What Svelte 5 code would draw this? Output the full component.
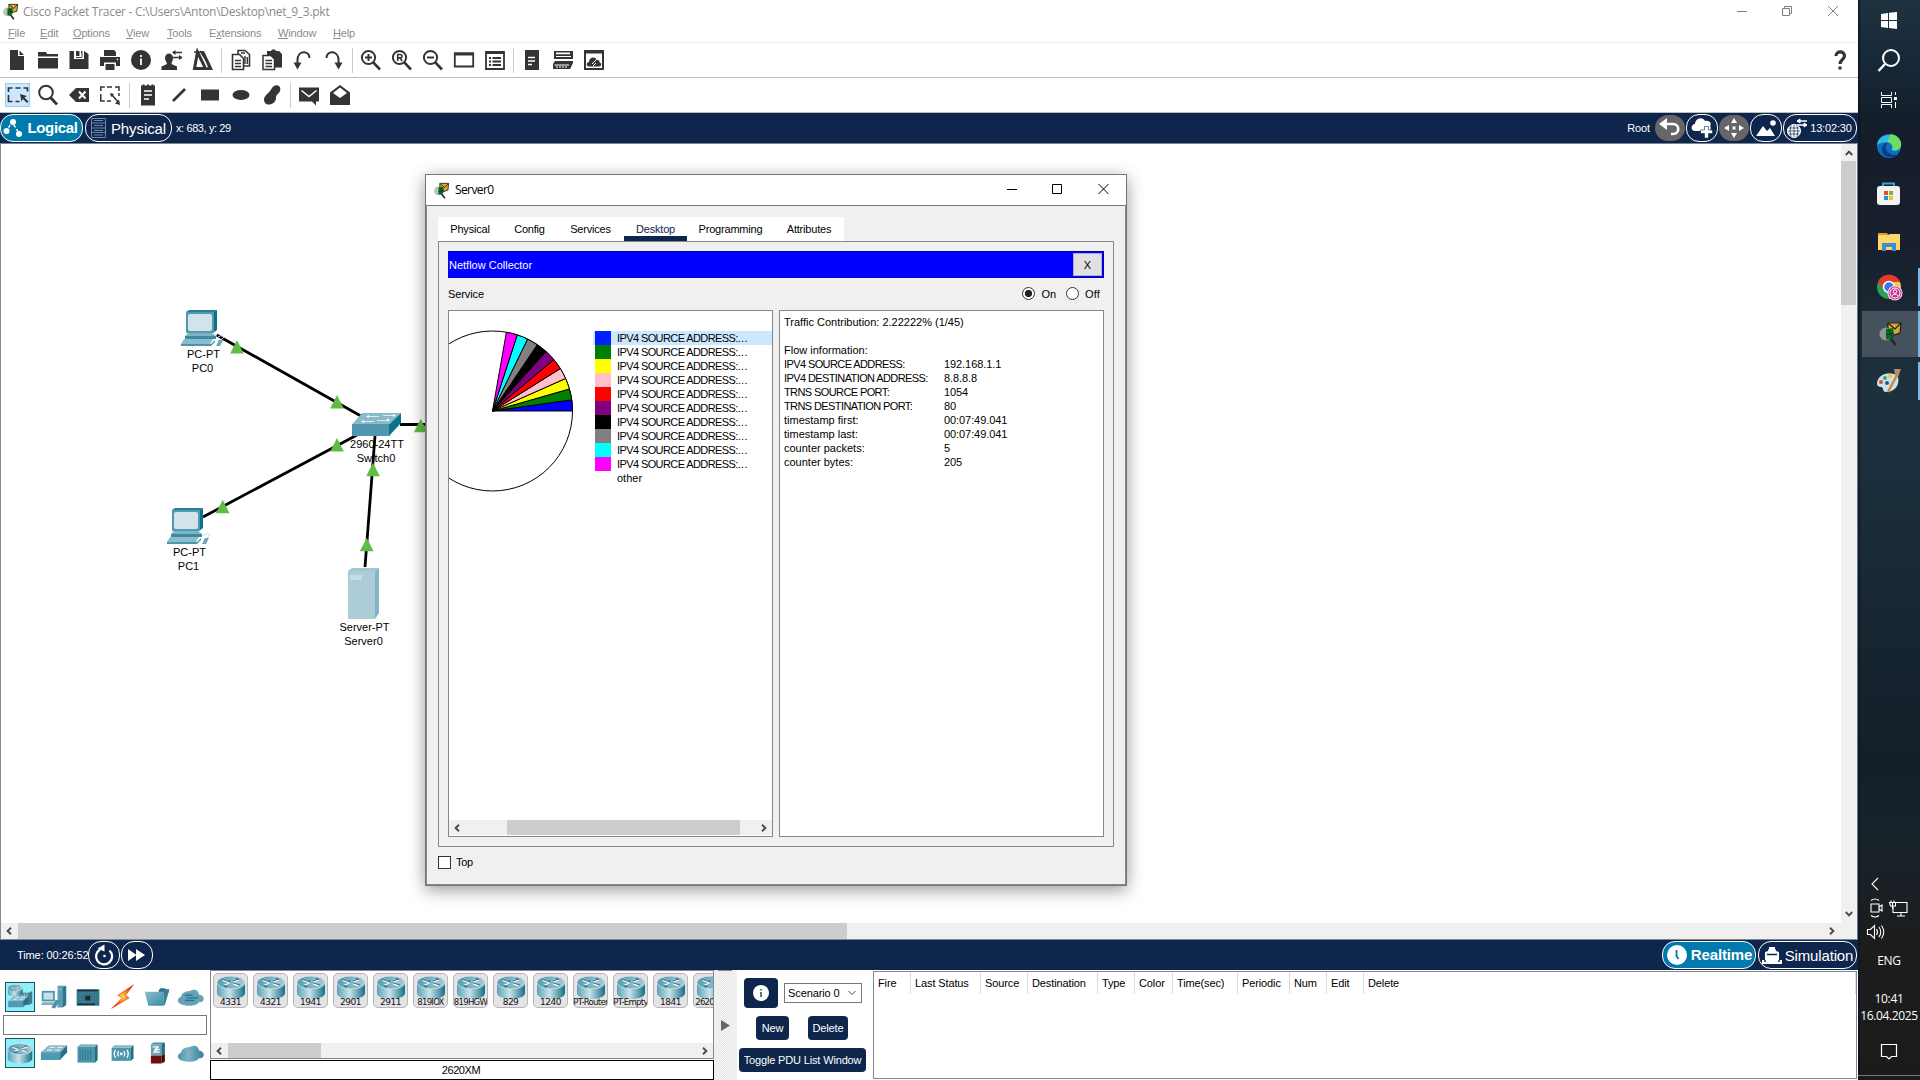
<script>
  const g = '#333436';
  const mag = (inner) =>
    `<circle cx="9.5" cy="9.5" r="6.6" fill="#fff" stroke="${g}" stroke-width="2"/><path d="M14.3 14.3 21 21.5" stroke="${g}" stroke-width="2.6"/>${inner}`;

  const icons = {
    doc: `<path fill="${g}" d="M5 2h8v6h6v14H5zM14.5 2.5 19 7h-4.500z"/>`,
    folder: `<path fill="${g}" d="M2 4h8l1 2h11v2.500H2zM2 10h20v10.500H2z"/>`,
    save: `<path fill="${g}" d="M2.500 3H7v8h10V3l4.500 3v15h-19zM9 3h3.500v5H9zM14 3h1.500v6H9v1h6z"/>`,
    print: `<path fill="${g}" d="M6 2h10l2 2v4H6zM2 9h20v9h-4v-3.500H6V18H2z"/><path fill="${g}" d="M7.500 16h9v6h-9z"/><circle cx="19.500" cy="11.500" r=".8" fill="#fff"/>`,
    info: `<circle cx="12" cy="12" r="10" fill="${g}"/><path stroke="#fff" stroke-width="1.800" d="M12 10.500V17M12 7v2"/>`,
    user: `<path fill="${g}" d="M5 10c0-6 8-6 8 0 0 3-1.500 4-1.500 6l5.500 2.500V22H1.500v-3.500L7 16c0-2-2-3-2-6z"/><path fill="none" stroke="${g}" stroke-width="1.500" d="M13 4.500h9M13 9.500h9"/><path fill="${g}" d="m12 4.500 3.500-2.500v5zM22.500 9.500 19 7v5z"/>`,
    tri: `<path fill="none" stroke="${g}" stroke-width="3" d="M6.500 4 3.500 20.500h11z"/><path fill="none" stroke="${g}" stroke-width="1.500" d="M3 4h7M9 3l10 15"/><path fill="${g}" d="M10 3h3l9 19H11l6-3z"/>`,
    copy: `<path fill="#fff" stroke="${g}" stroke-width="1.600" d="M9 2.500h7l4.500 4V18H9z"/><path stroke="${g}" fill="#fff" stroke-width="1.600" d="M3.500 6.500h7l4 4V21.500h-11z"/><path stroke="${g}" stroke-width="1.400" d="M6 12.500h6M6 15.500h6M6 18.500h6M16 8v8M18.300 9v7M12 5h4"/>`,
    paste: `<path fill="${g}" d="M7 3h4l1-1.500h3L16 3h3l3 3v13.500H7z"/><path stroke="${g}" fill="#fff" stroke-width="1.500" d="M3 7.500h8l3.500 3.500v10.500H3z"/><path stroke="${g}" stroke-width="1.400" d="M5.500 12.500H12M5.500 15.500H12M5.500 18.500H12"/>`,
    undo: `<path fill="none" stroke="${g}" stroke-width="2" d="M18.500 10c0-8-12-8-12 2v5"/><path fill="${g}" d="M2.500 14.500h8l-4 7z"/>`,
    redo: `<path fill="none" stroke="${g}" stroke-width="2" d="M5.500 10c0-8 12-8 12 2v5"/><path fill="${g}" d="M13.500 14.500h8l-4 7z"/>`,
    zin: mag(`<path stroke="${g}" stroke-width="2" d="M6 9.500h7M9.500 6v7"/>`),
    zr: mag(`<path fill="none" stroke="${g}" stroke-width="1.600" d="M7.700 13V6.500H10q2 0 2 1.700t-2 1.700H7.700M10 10l2.200 3"/>`),
    zout: mag(`<path stroke="${g}" stroke-width="2" d="M6 9.500h7"/>`),
    win: `<path fill="none" stroke="${g}" stroke-width="1.800" d="M2.800 5.500h18.400v13H2.800z"/><path stroke="${g}" stroke-width="3" d="M2 6h20"/>`,
    list: `<path fill="none" stroke="${g}" stroke-width="1.800" d="M3 4h18v17H3z"/><path stroke="${g}" stroke-width="3" d="M3 4.500h18"/><path stroke="${g}" stroke-width="1.800" d="M6 10h2M9.500 10H18M6 13.500h2M9.500 13.500H18M6 17h2M9.500 17H18"/>`,
    page: `<path fill="${g}" d="M5 2h14v20H5z"/><path stroke="#fff" stroke-width="1.500" d="M8 9.500h7M8 13h7M8 16.500h4"/>`,
    device: `<path fill="${g}" d="M3 3h19v8H3zM4 13h18v2l-3 6H2v-5z"/><path fill="#fff" d="M5 4.500h14v1.800H5zM5 8h15v1H5zM3.500 16.500H18v1H3.500z"/><path stroke="#fff" stroke-width="1" d="M6 18v2M9 18v2M12 18v2M15 18v2M4 12h17"/>`,
    cloud: `<path fill="none" stroke="${g}" stroke-width="2" d="M3 3h18v18H3z"/><path stroke="${g}" stroke-width="3" d="M3 4h18"/><path fill="${g}" d="M7 18.500c-3 0-3-4.500 0-4.500 0-5 6.500-6 7.500-2 3-.5 3.500 2 3 2.500 2.500 0 2 4 0 4z"/><path fill="none" stroke="#fff" d="M10 16l4-4m0 3-3 3"/>`,
    sel: `<path fill="none" stroke="${g}" stroke-width="1.700" d="M2.500 9V5h4M9.500 5h5M17.500 5h4v3.500M2.500 12v6.500h4M9.500 18.500h4"/><path fill="${g}" d="m14 11 7 2-2.500 1.500 4 4-1.500 1.500-4-4-1.500 2.500z"/>`,
    resize: `<path fill="none" stroke="${g}" stroke-width="1.500" d="M2.800 8V4h4M9 4h5M17 4h4v4M2.800 11v7h4M9 18h4M21 10v3M14 12l7 8"/><path fill="${g}" d="m12 10 4 1-3 3zM22 22l-5-1.500 4-4z"/>`,
    find: `<circle cx="10" cy="9.500" r="6.800" fill="none" stroke="${g}" stroke-width="2"/><path d="m14.500 14.500 6.500 7" stroke="${g}" stroke-width="2.800"/>`,
    del: `<path fill="${g}" d="M9 5h13v14H9l-7-7z"/><path stroke="#fff" stroke-width="2" d="m12 8.500 6.500 7m0-7-6.500 7"/>`,
    note: `<path fill="${g}" d="M5 2.500h1.500V1.500h2v1H11v-1h2v1h2.500v-1h2v1H19v20H5z"/><path stroke="#fff" stroke-width="1.500" d="M8 8h8M8 12h8M8 16h5"/>`,
    line: `<path stroke="${g}" stroke-width="2.600" d="M6 18 18 6"/>`,
    rect: `<path fill="${g}" d="M3 6.500h18v11H3z"/>`,
    oval: `<ellipse cx="12" cy="12" rx="8.500" ry="5" fill="${g}"/>`,
    blob: `<path fill="${g}" d="M12 5c3-5 10-3 8 3-1 3-4 3-4 7 0 6-9 9-11.500 4C2 13 9 11 12 5z"/>`,
    mail: `<path fill="${g}" d="M2 4.500h20v14h-3v4l-4-4H2z"/><path fill="none" stroke="#fff" stroke-width="1.500" d="m4.500 7.500 7.500 6 7.500-6"/>`,
    open: `<path fill="${g}" d="M2 9.500 12 2l10 7.500V22H2z"/><path fill="#fff" d="m5 10 7-5.500 7 5.500-7 5z"/>`
  };

  const bar1 = ['doc', 'folder', 'save', 'print', 'info', 'user', 'tri', '|', 'copy', 'paste', 'undo', 'redo', '|', 'zin', 'zr', 'zout', 'win', 'list', '|', 'page', 'device', 'cloud'];
  const bar2 = ['sel', 'find', 'del', 'resize', '|', 'note', 'line', 'rect', 'oval', 'blob', '|', 'mail', 'open'];
  // label, width, index of the underlined access key
  const menus = [['File', 16, 0], ['Edit', 17, 0], ['Options', 37, 0], ['View', 25, 0], ['Tools', 26, 0], ['Extensions', 53, 1], ['Window', 39, 0], ['Help', 22, 0]];
  const tabs = [['Physical', 64], ['Config', 55], ['Services', 67], ['Desktop', 63], ['Programming', 87], ['Attributes', 70]];
  const colors = ['#0000ff', '#008000', '#ffff00', '#ffc0cb', '#ff0000', '#800080', '#000000', '#808080', '#00ffff', '#ff00ff'];
  const swatches = ['#0020ff', ...colors.slice(1)];

  const R = 80, CX = 43.5, CY = 100;
  const point = (deg) => {
    const a = (deg * Math.PI) / 180;
    return `${(CX + R * Math.cos(a)).toFixed(2)} ${(CY - R * Math.sin(a)).toFixed(2)}`;
  };
  const slices = colors.map((fill, i) => ({ fill, d: `M${CX} ${CY}L${point(i * 8)}A${R} ${R} 0 0 0 ${point(i * 8 + 8)}Z` }));

  const flow = [
    ['IPV4 SOURCE ADDRESS:', '192.168.1.1', 1], ['IPV4 DESTINATION ADDRESS:', '8.8.8.8', 1], ['TRNS SOURCE PORT:', '1054', 1],
    ['TRNS DESTINATION PORT:', '80', 1], ['timestamp first:', '00:07:49.041', 0], ['timestamp last:', '00:07:49.041', 0],
    ['counter packets:', '5', 0], ['counter bytes:', '205', 0]
  ];
  const models = ['4331', '4321', '1941', '2901', '2911', '819IOX', '819HGW', '829', '1240', 'PT-Router', 'PT-Empty', '1841', '2620XM'];
  const columns = [['Fire', 37], ['Last Status', 70], ['Source', 47], ['Destination', 70], ['Type', 37], ['Color', 38], ['Time(sec)', 65], ['Periodic', 52], ['Num', 37], ['Edit', 37], ['Delete', 492]];

  const routerArt = `<path fill="url(#cyl)" d="M2 9v11c0 8 28 8 28 0V9z"/><ellipse cx="16" cy="9.500" rx="14" ry="6.500" fill="url(#top)" stroke="#d5e8ef" stroke-width=".8"/><path fill="none" stroke="#3c6f80" stroke-width="1" d="m7 6.500 7 2.500m0 0 .5-2M25 12l-7-2m-4 1.500-5 1.500m2.500-2-2.500 2 3 .5M18 8l6-2m-3-.4 3 .4-1.500 2"/><path fill="none" stroke="#fff" stroke-width="1.200" d="m7.500 7.500 6 2.200M18.500 9l5.500-1.800M18 11l5.500 1.700M9.500 12l5-1.600"/>`;
  const switchArt = `<path fill="#8ab9c9" d="m2 15 9-8h21l-8 8z"/><path fill="#4f9ab2" d="M2 15h22v9H2z"/><path fill="#28718a" d="m24 15 8-8v8l-8 9z"/><path stroke="#fff" d="M12 9.500h6M21 9.500h6M9 12.500h6M18 12.500h6"/>`;
  const palette1 = [
    `<path fill="#3d7c8f" d="M17 11h9l4-2v14l-4 2h-9z"/><path stroke="#8fc1d0" stroke-width="1.500" d="M18 12v10M21 12v10M24 12v10"/><g transform="translate(1 0) scale(.6)">${routerArt}</g><g transform="translate(1 9) scale(.78)">${switchArt}</g>`,
    `<path fill="#5c9db3" d="M20 3h9v22l-3 3h-6z"/><path fill="#2d788f" d="m26 5 4-2v22l-4 3z"/><path fill="#4f94ac" d="M2 9h15v12H2z"/><path fill="#c7dfe8" d="M4 11h11v8H4z"/><path fill="#7fb2c4" d="M3 22h14l2 3H1z"/><path fill="#4c94ab" d="m18 19 5 1-6 9-4-1z"/><path stroke="#a8ced9" d="M21 7h4"/>`,
    `<path fill="#31758b" d="M3 7h26v19H3z"/><path fill="#1c2c35" d="M13 14.500h5.500V20H13zM4 8h23v1.500H4zM4 23.500h20V25H4z"/><path stroke="#5d97a9" stroke-dasharray="1 1" d="M6 11.500h20M20 14.500h7M20 17.500h7M5 13.500h6M5 18.500h6M6 21.500h20"/>`,
    `<path fill="url(#bolt)" stroke="#e33e20" stroke-width=".6" d="M28 2 10 14l5 3L3 29l20-12-4-3z"/>`,
    `<path fill="#2a7389" d="M18 8l2-2h5l1 1h4l-1 4H18z"/><path fill="url(#fold)" d="M2 10h22l-1 16H6z"/><path fill="#347f96" d="M24 8h6l-5 17-2 1z"/>`,
    `<path fill="#64a3b8" d="M8 25c-7 0-10-7-3-10 0-5 8-6 10-6 4-3 10-1 10 4 8 1 7 10 0 9-2 4-11 5-17 3z"/><path stroke="#27768f" stroke-width="1.500" d="M9 14h9M11 17h13M9 20h11"/>`
  ];
  const palette2 = [
    `<g transform="translate(0 2)">${routerArt}</g>`,
    `<g transform="translate(-1 0)">${switchArt}</g>`,
    `<path fill="#4c95ab" d="M4 9h20v18H4z"/><path fill="#83b6c6" d="m4 9 3-3h20l-3 3z"/><path fill="#246c82" d="m24 9 3-3v18l-3 3z"/><path stroke="#2c7389" d="M7 12v12M10 12v12M13 12v12M16 12v12M19 12v12"/>`,
    `<path fill="#4c97ae" d="M3 10h22v15H3z"/><path fill="#83b6c6" d="m3 10 3-3h22l-3 3z"/><path fill="#246c82" d="m25 10 3-3v15l-3 3z"/><circle cx="14" cy="17" r="1.500" fill="#fff"/><path fill="none" stroke="#fff" stroke-width="1.400" d="M11 14q-2 3 0 6M17 14q2 3 0 6M7.500 12.500q-3 4.500 0 9M20.500 12.500q3 4.500 0 9"/>`,
    `<path fill="#4c8ea3" d="m9 6 3-2h13l-3 2z"/><path fill="#6aa5b5" d="M9 6h12v13H9z"/><path fill="#276c80" d="m21 6 4-2v15h-4z"/><path fill="#6c0d12" d="M9 19h12v9H9z"/><path fill="#4b0609" d="m21 19 4-1v8l-4 2z"/><path stroke="#fff" fill="none" stroke-width="1.600" d="M11 9h6l-3 3h5m0 3h-6l3-3"/>`,
    `<path fill="url(#fluff)" d="M8 25c-7 0-10-7-3-10 0-5 8-6 10-6 4-3 10-1 10 4 8 1 7 10 0 9-2 4-11 5-17 3z"/>`
  ];
  const tracer = `<path fill="#d9a441" stroke="#22230f" stroke-width="1.200" d="m10 2 13 0-1 10-12 4z"/><path fill="none" stroke="#22230f" stroke-width="1.200" d="m10 2 7 6 6-6"/><circle cx="8" cy="13" r="6.500" fill="#aaaea8" fill-opacity=".75"/><path fill="#0a6b20" d="M8 8l7-1 1 6-3 6-5-1z"/><path stroke="#063a12" d="M10 8l5 9M8 14l8-2"/><path stroke="#22252a" stroke-width="2.400" d="m13 18 4.500 6"/>`;
  const pcArt = `<path fill="#2a7d96" d="M5 2 8 0h28l-4 3v20H5z"/><path fill="#117089" d="m33 2 3-2v20l-4 3z"/><path fill="#4f9bb2" d="M5 2h28v21H5z"/><rect x="7" y="4" width="24" height="17" rx="2" fill="#d2e3ea"/><path fill="#7fb3c4" d="M7 23h24l4 3H4z"/><path fill="#3b8ba4" d="M4 26h31v3H4z"/><path fill="#8dbccb" d="M3 29h29l-3 5H0z"/><path fill="#4a96ad" d="M0 34h30l4-4v2l-4 4H0z"/><path fill="#6aa7b9" d="m38 30 4 0-3 6h-4z"/><path fill="none" stroke="#c7dde5" d="M36 28q4-4 7-1l-3 3"/>`;
  const arrows = [[237, 347], [337, 402], [337, 445], [222.7, 506.7], [373, 469.7], [366.7, 544.7], [420.7, 425.7]];
  const nodes = [
    ['PC-PT', 203.500, 358], ['PC0', 202.500, 372], ['2960-24TT', 377, 448], ['Switch0', 376, 462], ['PC-PT', 189.500, 556],
    ['PC1', 188.500, 570], ['Server-PT', 364.500, 631], ['Server0', 363.500, 645]
  ];

  const taskIcons = {
    start: `<path fill="#fff" d="m8 10 7-1v7H8zM16 8.800 24 8v8h-8zM8 17h7v7l-7-1zM16 17h8v8l-8-1z"/>`,
    search: `<circle cx="18" cy="14" r="8" fill="none" stroke="#fff" stroke-width="2"/><path stroke="#fff" stroke-width="2.400" d="M12 20 5.500 27"/>`,
    view: `<path fill="none" stroke="#fff" d="M8.500 8v3.500h10V8M8.500 24v-3.500h10V24M8.500 13.500h10v5h-10zM22.500 8v3M22.500 18v6"/><path fill="#fff" d="M21 13h3v3h-3z"/>`,
    edge: `<circle cx="16" cy="16" r="12" fill="#0b6fc4"/><path fill="#34b8e6" d="M4 15C5 2 27 1 28 14c0 7-6 7-9 6 3-8-8-10-15-5z"/><path fill="#6bdc66" d="M18 4c8 1 11 8 10 12-2 5-7 5-9 4 2-4-1-8-5-8z"/><path fill="#083f83" d="M15 13c-5 4-1 13 9 12-6 5-17 1-15-7 1-3 3-5 6-5z"/>`,
    store: `<path fill="none" stroke="#34a4e0" stroke-width="2" d="M10 10V5.500h11V10"/><rect x="4" y="8" width="23" height="19" rx="3" fill="#f3f3f3"/><path fill="#e64a26" d="M11 13h4v4h-4z"/><path fill="#7db72f" d="M16 13h4v4h-4z"/><path fill="#1b93e5" d="M11 18h4v4h-4z"/><path fill="#f8bd25" d="M16 18h4v4h-4z"/>`,
    files: `<path fill="#d99f1f" d="M5 7h9l2 3H5z"/><path fill="#ffd768" d="M5 9h10l2-1h10v16H5z"/><path fill="#3c8ed0" d="M9 17h14v8h-4v-4h-6v4H9z"/>`,
    chrome: `<circle cx="16" cy="16" r="12" fill="#2e9e4f"/><path fill="#e33b2e" d="M5 11C10 1 23 2 27 11H16l-5 8z"/><path fill="#fcc934" d="M27 11c3 8-2 17-11 17l5-9V11z"/><circle cx="16" cy="16" r="5.500" fill="#3b78e7" stroke="#fff" stroke-width="1.500"/><circle cx="22" cy="22" r="7" fill="#c42f8e" stroke="#f3cfe6" stroke-width="1.200"/><circle cx="22" cy="22" r="5" fill="none" stroke="#fff"/><circle cx="22" cy="20.500" r="1.800" fill="none" stroke="#fff"/><path fill="none" stroke="#fff" d="M18.500 25q3.500-3.500 7 0"/>`,
    tracer: `<g transform="translate(4 3)">${tracer}</g>`,
    paint: `<path fill="#c9e2ef" d="M4 19C4 8 20 5 25 12c2 8-3 15-12 15-4 0-2-5-5-5-2 0-4-1-4-3z"/><circle cx="8" cy="17" r="2" fill="#df4b3a"/><circle cx="12" cy="13" r="2" fill="#4ba84e"/><circle cx="17" cy="11" r="2" fill="#efc13d"/><circle cx="14" cy="18" r="2" fill="#235d86"/><path stroke="#d28a38" stroke-width="2.500" d="m15 27 9-17"/><path fill="#b98c61" d="m21 4 7 0-3 8-3-2z"/>`
  };
  const tasks = [['start', 40, ''], ['search', 40, ''], ['view', 39, ''], ['edge', 53, ''], ['store', 43, ''], ['files', 53, ''], ['chrome', 38, 'run'], ['gap', 5, ''], ['tracer', 46, 'run active'], ['gap', 5, ''], ['paint', 38, 'run']];
</script>

{#snippet icon(body, size, box)}
  <svg width={size} height={size} viewBox="0 0 {box} {box}">{@html body}</svg>
{/snippet}

{#snippet chev(dir)}
  <svg class="chev {dir}" width="8" height="8" viewBox="0 0 8 8"><path d="M6 .8 2.600 4 6 7.200" fill="none" stroke="#4a4a4a" stroke-width="1.900" /></svg>
{/snippet}

<svg class="defs" width="0" height="0">
  <defs>
    <linearGradient id="cyl"><stop offset="0" stop-color="#5ba2b8" /><stop offset=".45" stop-color="#c8e2ea" /><stop offset="1" stop-color="#176f89" /></linearGradient>
    <linearGradient id="top"><stop offset="0" stop-color="#559cb2" /><stop offset="1" stop-color="#a5cad6" /></linearGradient>
    <linearGradient id="fluff"><stop offset="0" stop-color="#4b93aa" /><stop offset=".4" stop-color="#7db4c5" /><stop offset="1" stop-color="#2f809a" /></linearGradient>
    <linearGradient id="fold" x2="1" y2="1"><stop offset="0" stop-color="#8cbecd" /><stop offset="1" stop-color="#3b8aa2" /></linearGradient>
    <radialGradient id="bolt"><stop offset="0" stop-color="#ffe34a" /><stop offset=".4" stop-color="#ff8b1e" /><stop offset="1" stop-color="#e8261c" /></radialGradient>
  </defs>
</svg>

<div class="screen">
  <main class="app">
    <header class="title">
      {@render icon(tracer, 17, 25)}
      <span class="caption">Cisco Packet Tracer - C:\Users\Anton\Desktop\net_9_3.pkt</span>
      <svg class="controls" width="100" height="20" viewBox="0 0 100 20" fill="none" stroke="#808080">
        <path d="M0 10.500h10M45.500 7.500h7v7h-7zM47.500 7.500v-2h7v7h-2M91 5l10 10M101 5 91 15" />
      </svg>
    </header>
    <nav class="menu">
      {#each menus as [name, width, key]}
        <span style:width="{width}px">{name.slice(0, key)}<u>{name[key]}</u>{name.slice(key + 1)}</span>
      {/each}
    </nav>

    <div class="tools">
      {#each bar1 as name}
        {#if name === '|'}<i class="sep"></i>{:else}<span class="tool">{@render icon(icons[name], 24, 24)}</span>{/if}
      {/each}
      <svg class="help" width="14" height="22" viewBox="0 0 14 22"><path fill="none" stroke="#333436" stroke-width="3.200" d="M3 7c0-5.500 8.500-5.500 8.500 0 0 3.500-4.500 3.500-4.500 8" /><path fill="#333436" d="M5.400 17.500h3.200v3H5.400z" /></svg>
    </div>
    <div class="tools second">
      {#each bar2 as name}
        {#if name === '|'}<i class="sep"></i>{:else}<span class="tool" class:picked={name === 'sel'}>{@render icon(icons[name], 24, 24)}</span>{/if}
      {/each}
    </div>

    <div class="navy top">
      <span class="pill on logical">
        <svg width="20" height="22" viewBox="0 0 20 22" fill="#fff"><path d="m3 15 6-10 7 11" fill="none" stroke="#fff" stroke-width="1.500" stroke-dasharray="3 2" /><circle cx="3.500" cy="14" r="3" /><circle cx="10" cy="5" r="3" /><circle cx="16" cy="17" r="3" /></svg>
        <b>Logical</b>
      </span>
      <span class="pill physical">
        <svg width="15" height="20" viewBox="0 0 15 20" fill="none" stroke="#7186ab"><path d="M.5.500h14v19H.500zM.5 5h14M.5 10h14M.5 14.500h14M3 2.500h9M3 7.500h9M3 12.500h9M3 17h9" /></svg>
        <span>Physical</span>
      </span>
      <span class="coords">x: 683, y: 29</span>
      <span class="root">Root</span>
      <span class="pill grey"><svg width="22" height="20" viewBox="0 0 22 20"><path fill="#fff" d="m0 6 8-6v12z" /><path fill="none" stroke="#fff" stroke-width="2.600" d="M6 6h8c7 0 7 10 0 10h-2" /></svg></span>
      <span class="pill small"><svg width="22" height="22" viewBox="0 0 22 22" fill="#fff"><path d="M4 14c-5 0-4-7 0-7 0-6 8-8 10-3 5-1 7 3 5 5 2 2 0 5-2 5z" /><path d="M13.500 9.500h4V13h4v3.500h-4V21h-4v-4.500h-4V13h4z" stroke="#0e264b" stroke-width=".6" /></svg></span>
      <span class="pill grey"><svg width="20" height="20" viewBox="0 0 20 20" fill="#fff"><path d="m10 0 3 5H7zM10 20l3-5H7zM0 10l5-3v6zM20 10l-5-3v6zM8.500 8.500h3v3h-3z" /></svg></span>
      <span class="pill small"><svg width="20" height="20" viewBox="0 0 20 20" fill="#fff"><circle cx="17" cy="5" r="2.800" /><path d="M0 18 7 8l4 5 3-3 5 8z" /></svg></span>
      <span class="pill clock">
        <svg width="20" height="22" viewBox="0 0 20 22" fill="none" stroke="#fff"><circle cx="7" cy="14" r="6.500" fill="#fff" /><path stroke="#0e264b" stroke-width=".7" d="M1 14h12M2 11h10M2 17h10M7 8v12M4 8q-2 6 0 12M10 8q2 6 0 12" /><path d="M10 4h10M10 8h10" stroke-width="1.500" /><path fill="#fff" d="m10 4 3-2v4zM20 8l-3-2v4z" /></svg>
        <span>13:02:30</span>
      </span>
    </div>

    <section class="workspace">
      <svg class="canvas" width="1840" height="779" viewBox="1 144 1840 779">
        <g stroke="#000" stroke-width="2.800"><path d="m216.700 335 146 82M203 517l154-82M400 424.500h28" /></g>
        <svg x="181" y="310" width="43" height="37" viewBox="0 0 43 37">{@html pcArt}</svg>
        <svg x="167" y="508" width="43" height="37" viewBox="0 0 43 37">{@html pcArt}</svg>
        <g>
          <path fill="#8ab9c8" d="m352 424.500 10-11.500h39l-12 11.500z" /><path fill="#4f97ae" d="M352 424h37.500v12H352z" /><path fill="#0d718c" d="m389 424.500 12-11.500v10l-12 13z" />
          <path stroke="#fff" d="M368 416.500h11M383 415.500h11M363 421.500h11M377 420.500h11" stroke-opacity=".7" /><path fill="#fff" d="m366 416.500 3-1.500v3zM396 415.500l-3-1.500v3zM361 421.500l3-1.500v3zM390 420l-3-1.500v3z" />
        </g>
        <path stroke="#000" stroke-width="2.800" d="m375 436-10 131" />
        <path fill="#9fc7d2" d="m348 571 4-3h27l-4 3z" /><path fill="#accdd8" d="M348 571h27v48h-27z" /><path fill="#86b4c4" d="m375 571 4-3v45l-4 6z" /><path fill="#c6dde5" d="M350 575h12v5h-12z" />
        {#each arrows as [x, y]}<path fill="#5fbc46" d="m{x} {y - 7} 6.800 13.500h-13.600z" />{/each}
        <g class="labels">{#each nodes as [text, x, y]}<text {x} {y}>{text}</text>{/each}</g>
      </svg>
      <div class="vbar">{@render chev('up')}<i></i>{@render chev('down')}</div>
      <div class="hbar">{@render chev('left')}<i></i>{@render chev('right')}</div>
    </section>

    <div class="navy low">
      <span class="time">Time: 00:26:52</span>
      <span class="pill small"><svg width="20" height="22" viewBox="0 0 20 22"><path fill="none" stroke="#fff" stroke-width="2.300" d="M15.500 6.500A8 8 0 1 1 6 5.500" /><path fill="#fff" d="m3.500 4.500 7-4v7z" /><circle cx="10.500" cy="12" r="1.300" fill="#fff" /></svg></span>
      <span class="pill small"><svg width="18" height="12" viewBox="0 0 18 12" fill="#fff"><path d="m0 0 8.500 6L0 12zM8 0l9 6-9 6z" /></svg></span>
      <span class="pill on real"><svg width="22" height="22" viewBox="0 0 22 22"><circle cx="11" cy="11" r="10" fill="#fff" /><path d="M10.500 6v6l2 3" stroke="#0079ac" fill="none" stroke-width="1.800" /></svg><b>Realtime</b></span>
      <span class="pill simu"><svg width="20" height="18" viewBox="0 0 20 18" fill="#fff"><path d="M3 14V6l3-1q0-2 1-2V1h6v2q1 0 1 2l3 1v8z" /><path d="M0 14h20v4H0z" /><path stroke="#0e264b" stroke-width="1.500" d="M5 8.500h10M3 14v2M17 14v2" /></svg><span>Simulation</span></span>
    </div>

    <footer class="bottom">
      <div class="palette">
        <div class="kinds">{#each palette1 as art, i}<span class:hot={i === 0}>{@render icon(art, 28, 32)}</span>{/each}</div>
        <div class="search"></div>
        <div class="kinds">{#each palette2 as art, i}<span class:hot={i === 0}>{@render icon(art, 28, 32)}</span>{/each}</div>
      </div>
      <div class="models">
        <div class="shelf">
          <div class="row">
            {#each models as model}
              <span class="model" class:tight={model.length > 4}>{@render icon(routerArt, 32, 32)}<em>{model}</em></span>
            {/each}
          </div>
          <div class="mbar">{@render chev('left')}<i></i>{@render chev('right')}</div>
        </div>
        <div class="chosen">2620XM</div>
      </div>
      <div class="splitter"><svg width="9" height="11" viewBox="0 0 9 11"><path fill="#666" d="m0 0 9 5.500L0 11z" /></svg></div>
      <div class="scenario">
        <div class="line one">
          <span class="infobtn"><svg width="16" height="16" viewBox="0 0 16 16"><circle cx="8" cy="8" r="8" fill="#fff" /><path stroke="#0e264b" stroke-width="1.300" d="M8 7v5M8 4v1.500" /></svg></span>
          <span class="select">Scenario 0 <svg width="8" height="6" viewBox="0 0 8 6"><path fill="none" stroke="#444" d="m.5 1 3.500 3.500L7.500 1" /></svg></span>
        </div>
        <div class="line two"><span class="btn new">New</span><span class="btn delete">Delete</span></div>
        <span class="btn toggle">Toggle PDU List Window</span>
      </div>
      <div class="pdu">
        {#each columns as [name, width]}<span style:width="{width}px">{name}</span>{/each}
      </div>
    </footer>
  </main>

  <aside class="taskbar">
    {#each tasks as [name, height, state]}
      <span class="task {state}" style:height="{height}px">{#if taskIcons[name]}{@render icon(taskIcons[name], 32, 32)}{/if}</span>
    {/each}
    <div class="tray">
      <svg width="62" height="76" viewBox="0 0 62 76" fill="none" stroke="#fff" stroke-width="1.100">
        <path d="m20 8-6 6 6 6" />
        <path d="M13 34h8v8h-8zM21 37l3-2v6l-3-2M13 30.500q4-3 8 0M13 45.500q4 3 8 0" />
        <path d="M37 32.500h12v10H35v-6M39 46h8M43 43v3M34.500 32v7M31.500 32.500h6v3.500h-5zM33 30.500v2M36 30.500v2" />
        <path d="M9.500 59.500h3l4-4v13l-4-4h-3zM18.500 59q2 3 0 6M21 57q3.500 5 0 10M23.500 55.500q4.500 6.500 0 13" />
      </svg>
      <span class="lang">ENG</span>
      <span class="now">10:41</span>
      <span class="date">16.04.2025</span>
      <svg class="bell" width="18" height="18" viewBox="0 0 18 18"><path fill="none" stroke="#fff" stroke-width="1.200" d="M1.500 1.500h15v12h-5L9 16l-2.500-2.500h-5z" /></svg>
    </div>
  </aside>

  <section class="dialog">
    <header>
      {@render icon(tracer, 17, 25)}
      <span class="caption">Server0</span>
      <svg class="controls" width="102" height="12" viewBox="0 0 102 12" fill="none" stroke="#000"><path d="M0 6.500h10M45.500 1.500h9v9h-9zM91.500 1l10 10M101.500 1l-10 10" /></svg>
    </header>
    <div class="content">
      <div class="tabs">{#each tabs as [name, width]}<span class:current={name === 'Desktop'} style:width="{width}px">{name}</span>{/each}</div>
      <div class="pane">
        <div class="strip"><span>Netflow Collector</span><button>X</button></div>
        <div class="service"><span>Service</span><span class="radio checked"></span><span class="lab">On</span><span class="radio"></span><span class="lab off">Off</span></div>
        <div class="split">
          <div class="box chart">
            <div class="view">
              <svg width="144" height="200" viewBox="0 0 144 200">
                <circle cx={CX} cy={CY} r={R} fill="#fff" stroke="#000" />
                {#each slices as s}<path d={s.d} fill={s.fill} stroke="#000" stroke-width="1" />{/each}
              </svg>
              <ul>
                {#each swatches as color, i}
                  <li class:selected={i === 0}><i style:background={color}></i><span>IPV4 SOURCE ADDRESS:<small>...</small></span></li>
                {/each}
                <li class="other"><i></i>other</li>
              </ul>
            </div>
            <div class="cbar">{@render chev('left')}<i></i>{@render chev('right')}</div>
          </div>
          <div class="box info">
            <p>Traffic Contribution: 2.22222% (1/45)</p>
            <p class="gap">Flow information:</p>
            {#each flow as [key, value, caps]}
              <div class="pair"><span class:caps>{key}</span><span>{value}</span></div>
            {/each}
          </div>
        </div>
      </div>
      <div class="ontop"><i></i>Top</div>
    </div>
  </section>
</div>

<style>
  :global(body) { margin: 0; overflow: hidden; background: #fff; }
  * { box-sizing: border-box; }
  svg { display: block; flex: none; }
  .defs { position: absolute; }
  .screen { position: relative; display: flex; width: 1920px; height: 1080px; overflow: hidden; font: 11px/14px "Liberation Sans", Arial, sans-serif; color: #000; white-space: nowrap; }
  .app { display: flex; flex-direction: column; width: 1858px; background: #fff; }
  .caption { font-family: "Open Sans", "Noto Sans", sans-serif; }

  .title { display: flex; align-items: center; height: 23px; padding: 0 15px 0 2px; }
  .title .caption { margin-left: 4px; font-size: 12px; letter-spacing: -.28px; color: #8b8b8b; flex: 1; }
  .title .controls { overflow: visible; margin-right: 6px; margin-top: -1px; }
  .menu { display: flex; gap: 16px; height: 20px; padding: 3px 0 0 8px; border-bottom: 1px solid #eee; color: #8b8b8b; }
  .menu span { letter-spacing: -.15px; }
  .menu u { text-underline-offset: 1px; }
  .tools { display: flex; align-items: center; height: 35px; padding-left: 2px; border-bottom: 1px solid #bdbdbd; }
  .tool { display: grid; place-items: center; width: 30.950px; height: 24px; }
  .tool.picked { background: #cce8ff; width: 25px; height: 24px; margin: 0 3px; outline: 1px solid #99cdf3; outline-offset: -1px; }
  .sep { width: 1px; height: 25px; margin: 0 2.800px; background: #ccc; }
  .help { margin-left: auto; margin-right: 11px; }

  .navy { display: flex; align-items: center; background: #0e264b; color: #fff; flex: none; }
  .navy.top { height: 31px; border-bottom: 1px solid #7b8493; }
  .pill { display: flex; align-items: center; justify-content: center; height: 28px; border: 1px solid #fff; border-radius: 13px; flex: none; }
  .pill.on { background: #0079ac; }
  .pill b, .physical span, .simu span { font-size: 15px; line-height: 24px; }
  .logical { width: 83px; gap: 4px; padding-right: 2px; }
  .logical b { letter-spacing: -.35px; }
  .physical { width: 87px; margin-left: 2px; gap: 5px; }
  .physical span { letter-spacing: -.1px; padding-top: 1px; }
  .coords { margin-left: 4px; letter-spacing: -.4px; }
  .root { margin-left: auto; margin-right: 4px; letter-spacing: -.1px; }
  .pill.grey { width: 30px; height: 26px; margin: 0 1px; border: 0; background: #666; }
  .pill.small { width: 32px; }
  .clock { width: 74px; gap: 3px; margin-left: 1px; margin-right: 1px; letter-spacing: -.15px; }
  .clock span { margin-right: 1px; }
  .low { height: 30px; }
  .time { margin-left: 17px; margin-right: 1px; width: 70px; letter-spacing: -.1px; }
  .low .small + .small { margin-left: 1px; }
  .real { width: 94px; margin-left: auto; gap: 3px; }
  .real b { letter-spacing: -.15px; }
  .simu { width: 99px; margin: 0 1px 0 2px; gap: 3px; }
  .simu span { letter-spacing: -.15px; padding-top: 1px; }

  .workspace { display: grid; grid-template: 779px 16px / 1840px 16px; height: 796px; border-left: 1px solid #8a8a8a; border-bottom: 1px solid #7f858e; border-right: 1px solid #6d7c8d; flex: none; }
  .labels text { font-size: 11px; text-anchor: middle; }
  .vbar { display: flex; flex-direction: column; align-items: center; background: #f0f0f0; }
  .vbar .chev { margin: 5px 0 4px; }
  .vbar .down { margin-bottom: 5px; }
  .vbar i { width: 15px; height: 144px; margin-bottom: auto; margin-right: 1px; background: #cdcdcd; }
  .hbar { grid-column: 1 / 3; display: flex; align-items: center; height: 16px; background: #f0f0f0; }
  .hbar .chev { margin: 0 5px 0 4px; }
  .hbar i { width: 829px; height: 16px; margin-right: auto; background: #cdcdcd; }
  .hbar .right { margin-right: 21px; }
  .right { transform: scaleX(-1); }
  .up { transform: rotate(90deg); }
  .down { transform: rotate(-90deg); }

  .bottom { display: flex; height: 110px; }
  .palette { width: 210px; padding: 12px 3px 0 3px; }
  .kinds { display: flex; justify-content: space-between; height: 30px; padding: 0 1px 0 2px; }
  .kinds span { display: grid; place-items: center; width: 30px; height: 30px; }
  .kinds .hot { background: #8df1f9; border: 1px solid #1b5563; }
  .search { width: 204px; height: 20px; margin: 3px 0; border: 1px solid #777; }
  .models { width: 504px; }
  .shelf { height: 89px; border: 1px solid #828790; padding-top: 2px; }
  .row { display: flex; gap: 5px; overflow: hidden; padding-left: 2px; height: 70px; }
  .model { display: flex; flex-direction: column; align-items: center; width: 35px; height: 35px; flex: none; overflow: hidden; border: 1px solid #b6b6b6; border-radius: 5px; background: #e4e4e4; }
  .model em { margin-top: -8px; font: 9px/10px "DejaVu Sans", sans-serif; color: #111; letter-spacing: -.5px; }
  .model svg { margin-top: -1px; height: 32px; }
  .tight em { font-size: 8.500px; letter-spacing: -.7px; }
  .mbar, .cbar { display: flex; align-items: center; height: 15px; background: #f0f0f0; }
  .mbar .left { margin: 0 5px 0 4px; }
  .mbar i { width: 93px; height: 15px; margin-right: auto; background: #cdcdcd; }
  .mbar .right { margin-right: 4px; }
  .chosen { height: 20px; margin-top: 1px; padding-right: 2px; border: 1px solid #000; text-align: center; line-height: 18px; letter-spacing: -.4px; }
  .splitter { display: flex; align-items: center; width: 23px; padding-left: 3px; border-left: 4px solid #f0f0f0; border-right: 5px solid #f0f0f0; background: linear-gradient(#888, #888) 0 0 / 100% 1px no-repeat, repeating-conic-gradient(#e4e4e4 0 25%, #fafafa 0 50%) 0 0 / 2px 2px; }
  .scenario { width: 136px; padding: 8px 0 0 2px; }
  .line { display: flex; align-items: center; }
  .one { gap: 6px; padding-left: 5px; }
  .infobtn { display: grid; place-items: center; width: 34px; height: 30px; border-radius: 4px; background: #0e264b; }
  .select { display: flex; align-items: center; justify-content: space-between; width: 78px; height: 20px; padding: 0 5px 0 3px; border: 1px solid #777; letter-spacing: -.1px; }
  .two { gap: 19px; padding: 8px 0 8px 17px; }
  .btn { display: grid; place-items: center; height: 24px; border-radius: 4px; background: #0e264b; color: #fff; letter-spacing: -.15px; }
  .new { width: 33px; }
  .delete { width: 40px; }
  .toggle { width: 127px; }
  .pdu { display: flex; width: 984px; height: 108px; margin-top: 1px; border: 1px solid #828790; }
  .pdu span { height: 22px; padding: 4px 0 0 4px; border-right: 1px solid #ddd; letter-spacing: -.12px; flex: none; }

  .taskbar { display: flex; flex-direction: column; width: 62px; background: linear-gradient(90deg, #0a1420 0, transparent 3px), linear-gradient(#1e3240, #172838 60px, #141d29 130px, #18202e 245px, #1b2733 310px, #1c303e 380px, #1b2f3e 460px, #182733 600px, #131f29 760px, #19232a 850px, #1c1c1d 940px, #1b1b1c); color: #fff; text-align: center; }
  .task { display: grid; place-items: center; border-right: 2px solid transparent; padding-left: 2px; flex: none; }
  .run { border-right-color: #76b9ed; }
  .active { background: #45525e; margin-left: 4px; padding-left: 0; }
  .tray { display: flex; flex-direction: column; height: 206px; margin-top: auto; margin-bottom: 4px; border-bottom: 1px solid #777; font: 12px/17px "Open Sans", sans-serif; letter-spacing: -.35px; }
  .lang { margin-top: 6px; }
  .now { margin-top: 21px; }
  .bell { margin: 19px auto 0; }

  .dialog { position: absolute; left: 425px; top: 174px; width: 702px; height: 712px; display: flex; flex-direction: column; border: 1px solid #777; background: #f0f0f0; box-shadow: 0 4px 16px rgba(0, 0, 0, .4); }
  .dialog header { display: flex; align-items: center; height: 31px; padding: 0 17px 0 7px; background: #fff; border-bottom: 1px solid #777; }
  .dialog .caption { margin-left: 5px; font-size: 12px; letter-spacing: -.6px; }
  .dialog .controls { margin-left: auto; margin-bottom: 2px; }
  .content { flex: 1; padding: 11px 11px 0 11px; border: 1px solid #888; border-top: 0; }
  .tabs { display: flex; width: 406px; height: 24px; background: #fff; text-align: center; letter-spacing: -.2px; }
  .tabs span { padding-top: 5px; height: 24px; }
  .tabs .current { border-bottom: 5px solid #0e264b; color: #0e264b; }
  .pane { height: 606px; padding: 9px 9px 0; border: 1px solid #828790; }
  .strip { display: flex; align-items: center; height: 27px; padding: 0 2px 0 1px; background: #00f; border: 1px solid #0000b4; border-left: 0; color: #fff; }
  .strip span { flex: 1; }
  .strip button { width: 29px; height: 23px; padding: 0; border: 1px solid #adadd0; background: #e1e1e1; font: inherit; color: #000; margin-right: -1px; }
  .service { display: flex; align-items: center; height: 31px; margin-bottom: 1px; letter-spacing: -.1px; }
  .service span:first-child { margin-right: auto; }
  .radio { width: 13px; height: 13px; border: 1px solid #333; border-radius: 50%; background: #fff; }
  .checked { background: radial-gradient(circle, #222 3.300px, #fff 4px); }
  .lab { margin: 0 10px 0 6px; }
  .off { margin-right: 4px; letter-spacing: .2px; }
  .split { display: flex; justify-content: space-between; }
  .box { width: 325px; height: 527px; border: 1px solid #828790; background: #fff; }
  .chart { display: flex; flex-direction: column; }
  .view { display: flex; flex: 1; overflow: hidden; }
  ul { list-style: none; margin: 20px 0 0; padding: 0; flex: 1; letter-spacing: -.6px; }
  small { font-size: 11px; letter-spacing: .4px; }
  li { display: flex; height: 14px; padding-left: 2px; }
  li i { width: 16px; height: 14px; margin-right: 6px; }
  .selected { background: #cce8ff; }
  .other { letter-spacing: 0; }
  .cbar { margin-bottom: 1px; }
  .cbar .left { margin: 0 46px 0 4px; }
  .cbar i { width: 233px; height: 15px; background: #cdcdcd; margin-right: auto; }
  .cbar .right { margin-right: 4px; }
  .info { padding: 4px 0 0 4px; }
  .info p { margin: 0; }
  .info .gap { margin-top: 14px; }
  .pair { display: grid; grid-template-columns: 160px 1fr; }
  .pair span:last-child { letter-spacing: -.08px; }
  .caps { letter-spacing: -.6px; }
  .ontop { display: flex; align-items: center; gap: 5px; margin-top: 8px; letter-spacing: -.3px; }
  .ontop i { width: 13px; height: 13px; border: 1px solid #333; background: #fff; }
</style>
